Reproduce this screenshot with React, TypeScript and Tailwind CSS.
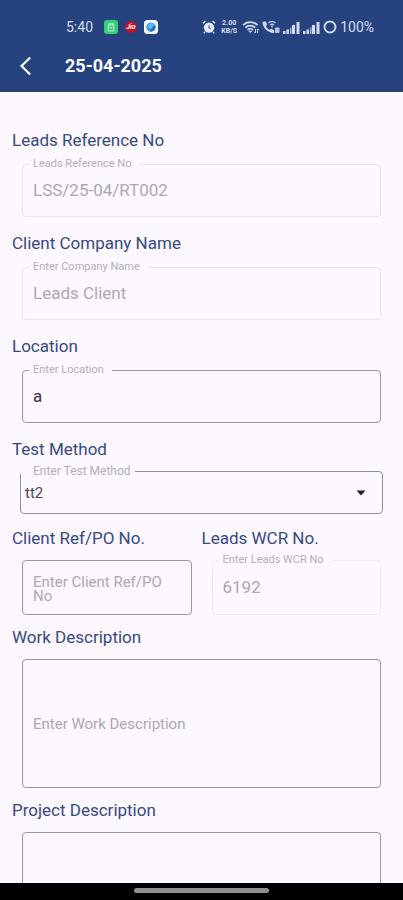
import { useState, type ReactNode } from "react";

function Outline({
  id,
  caption,
  tone = "border-[#9b979f]",
  children,
}: {
  id: string;
  caption: string;
  tone?: string;
  children: ReactNode;
}) {
  return (
    <fieldset className={"mx-2.5 min-w-0 rounded-[4px] border " + tone}>
      <legend className="ml-1.5 h-3 pl-1 pr-2 text-[11px] leading-3 text-[#b3afb5]">
        <label htmlFor={id} className="block">
          {caption}
        </label>
      </legend>
      {children}
    </fieldset>
  );
}

function Heading({ htmlFor, children }: { htmlFor: string; children: ReactNode }) {
  return (
    <label htmlFor={htmlFor} className="block text-[17px] leading-6 text-[#354a80]">
      {children}
    </label>
  );
}

function AlarmIcon() {
  return (
    <svg viewBox="0 0 14 14" className="h-3.5 w-3.5" fill="none" aria-hidden="true">
      <circle cx="7" cy="7.6" r="5.2" fill="#e3e9f5" />
      <path d="M7 5.200v2.600l1.500 1" stroke="#4d6394" strokeWidth="1.200" />
      <path d="M1 3.200 3.400 1.100M13 3.200 10.600 1.100M3 12l-1.200 1.300M11 12l1.200 1.300" stroke="#e3e9f5" strokeWidth="1.500" />
    </svg>
  );
}

function WifiIcon() {
  return (
    <svg viewBox="0 0 17 14" className="h-3.5 w-[17px]" fill="none" stroke="#d3dcee" aria-hidden="true">
      <path d="M1 5.200C5 1 11.500 1 15.500 5.200M3.300 7.700C6 5 10.400 5 13.200 7.700M5.500 10C7 8.500 9.500 8.500 11 10" strokeWidth="1.700" />
      <path d="m6.200 10.800 2.100 2.200 2.100-2.200Z" fill="#d3dcee" stroke="none" />
      <path d="M13.500 9v4M12.400 11.800l1.100 1.200M15.600 13V9M15.600 9l1 1.200" strokeWidth="1" />
    </svg>
  );
}

function CallIcon() {
  return (
    <svg viewBox="0 0 18 14" className="h-3.5 w-[18px]" fill="none" aria-hidden="true">
      <path
        d="M.5 2 3.600 1.200 5.200 4.600 3.900 5.900C4.700 7.800 6 9.100 7.900 10L9.300 8.700 12.200 10.200V13C6.500 13.400.5 8 .5 2Z"
        fill="#d3dcee"
      />
      <path d="M6.500 2.800C8.500 1.200 11.500 1.200 13.500 2.800M8 4.900C9.200 4 10.800 4 12 4.900" stroke="#b9c6e2" strokeWidth="1.500" />
      <path d="M10 5.500v2" stroke="#b9c6e2" strokeWidth="1.500" />
      <rect x="13" y="7.500" width="4.500" height="5.500" rx="1" fill="#b9c6e2" />
    </svg>
  );
}

function SignalIcon() {
  return (
    <svg viewBox="0 0 17 13" className="h-[13px] w-[17px]" fill="#d3dcee" aria-hidden="true">
      <path d="M0 10h2.500v3H0zM3.500 8.500H6V13H3.500zM9 4h3v9H9zM13.500 1h3v12h-3z" />
      <path d="M7 6.500h1.500V13H7z" fill="#9fafd2" />
    </svg>
  );
}

function StatusBar() {
  return (
    <div className="flex h-[26px] items-center justify-between pl-[66px] pr-[29px] text-[#d5deef]">
      <div className="flex items-center gap-[7px]">
        <span className="mr-1 text-sm">5:40</span>
        <svg viewBox="0 0 14 14" className="h-3.5 w-3.5" fill="none" aria-hidden="true">
          <rect width="14" height="14" rx="3" fill="#35cd76" />
          <path d="M5 4.800V3.600h4v1.200M4.300 5h5.400v5.800H4.300zM5.500 7.800h3" stroke="#a8ecc4" strokeWidth="1.200" />
        </svg>
        <span className="flex h-3 w-3 items-center justify-center rounded-full bg-[#c90f22] text-[7px] font-bold italic leading-none text-white">
          Jio
        </span>
        <svg viewBox="0 0 14 14" className="h-3.5 w-3.5" aria-hidden="true">
          <rect width="14" height="14" rx="3.500" fill="#f3f8ff" />
          <circle cx="7" cy="7" r="4.600" fill="#2e8cec" />
          <path d="M3.400 6.500C5 2.800 8.500 2.300 10.500 4L8 7 6.500 9.500Z" fill="#67bdf8" />
          <path d="M11.500 6C12 10 8.500 12.200 5.500 11.300L8 8Z" fill="#226bd5" />
        </svg>
      </div>
      <div className="flex items-center gap-[3px]">
        <AlarmIcon />
        <span className="flex w-5 flex-col items-center text-[7px] font-bold leading-[8px]">
          <span>2.00</span>
          <span>KB/S</span>
        </span>
        <WifiIcon />
        <CallIcon />
        <SignalIcon />
        <SignalIcon />
        <svg viewBox="0 0 14 14" className="h-3.5 w-3.5" fill="none" aria-hidden="true">
          <circle cx="7" cy="7" r="5.500" stroke="#d3dcee" strokeWidth="1.900" />
        </svg>
        <span className="text-sm">100%</span>
      </div>
    </div>
  );
}

export default function App() {
  const [location, setLocation] = useState("a");

  return (
    <div className="flex h-screen flex-col overflow-hidden bg-[#fdf7ff] font-['Roboto',sans-serif]">
      <header className="shrink-0 bg-[#26427f] pt-3.5">
        <StatusBar />
        <div className="flex h-[52px] items-center pl-4">
          <button type="button" aria-label="Back" className="flex h-8 w-[49px] items-center">
            <svg viewBox="0 0 20 20" className="h-5 w-5" fill="none" stroke="#fff" strokeWidth="2.200" aria-hidden="true">
              <path d="M14.200 1.500 5.500 10l8.700 8.500" />
            </svg>
          </button>
          <h1 className="text-lg font-bold leading-6 text-white">25-04-2025</h1>
        </div>
      </header>

      <main className="min-h-0 flex-1 overflow-hidden px-3 pt-9">
        <form>
          <div className="mb-3.5 flex flex-col gap-1.5">
            <Heading htmlFor="reference">Leads Reference No</Heading>
            <Outline id="reference" caption="Leads Reference No" tone="border-[#e9e3eb]">
              <input id="reference" disabled defaultValue="LSS/25-04/RT002" className="block h-[46px] w-full px-2.5 pb-1.5 text-[17px] text-[#aca8af]" />
            </Outline>
          </div>

          <div className="mb-3.5 flex flex-col gap-1.5">
            <Heading htmlFor="company">Client Company Name</Heading>
            <Outline id="company" caption="Enter Company Name" tone="border-[#e9e3eb]">
              <input id="company" disabled defaultValue="Leads Client" className="block h-[46px] w-full px-2.5 pb-1.5 text-[17px] text-[#aca8af]" />
            </Outline>
          </div>

          <div className="mb-3.5 flex flex-col gap-1.5">
            <Heading htmlFor="location">Location</Heading>
            <Outline id="location" caption="Enter Location">
              <input
                id="location"
                value={location}
                onChange={(event) => setLocation(event.target.value)}
                className="block h-[46px] w-full px-2.5 pb-1.5 text-[17px] text-[#39363d] outline-none"
              />
            </Outline>
          </div>

          <div className="mb-3 flex flex-col gap-1">
            <Heading htmlFor="method">Test Method</Heading>
            <fieldset className="mx-2 min-w-0 rounded-[4px] border border-[#8e919d]">
              <legend className="h-3 pl-3 pr-1 text-xs leading-3 text-[#b3afb5]">Enter Test Method</legend>
              <div className="grid h-9 items-center pb-1">
                <select id="method" className="col-start-1 row-start-1 h-8 w-full appearance-none pl-1 text-[15px] text-[#4b484f] outline-none">
                  <option>tt2</option>
                </select>
                <svg viewBox="0 0 10 6" className="pointer-events-none col-start-1 row-start-1 mr-4 h-1.5 w-2.5 justify-self-end" aria-hidden="true">
                  <path d="M.5.5h9L5 5.500z" fill="#252328" />
                </svg>
              </div>
            </fieldset>
          </div>

          <div className="mb-2.5 grid grid-cols-2">
            <div className="flex min-w-0 flex-col gap-2.5">
              <Heading htmlFor="client-ref">Client Ref/PO No.</Heading>
              <textarea
                id="client-ref"
                placeholder="Enter Client Ref/PO No"
                className="mx-2.5 block h-[55px] resize-none overflow-hidden rounded-[4px] border border-[#9b979f] px-2.5 pt-3.5 text-[15px] leading-[14px] outline-none placeholder:text-[#aca8af]"
              />
            </div>
            <div className="flex min-w-0 flex-col gap-1">
              <Heading htmlFor="wcr">Leads WCR No.</Heading>
              <Outline id="wcr" caption="Enter Leads WCR No" tone="border-[#efe9f1]">
                <input id="wcr" disabled defaultValue="6192" className="block h-12 w-full px-2.5 pb-1.5 text-[17px] text-[#aca8af]" />
              </Outline>
            </div>
          </div>

          <div className="mb-2.5 flex flex-col gap-2.5">
            <Heading htmlFor="work">Work Description</Heading>
            <textarea
              id="work"
              placeholder="Enter Work Description"
              className="mx-2.5 block h-[129px] resize-none rounded-[4px] border border-[#9b979f] px-2.5 py-14 text-[15px] leading-4 outline-none placeholder:text-[#aca8af]"
            />
          </div>

          <div className="flex flex-col gap-2.5">
            <Heading htmlFor="project">Project Description</Heading>
            <textarea
              id="project"
              placeholder="Enter Project Description"
              className="mx-2.5 block h-[129px] resize-none rounded-[4px] border border-[#9b979f] px-2.5 py-14 text-[15px] leading-4 outline-none placeholder:text-[#aca8af]"
            />
          </div>
        </form>
      </main>

      <footer className="flex h-[17px] shrink-0 justify-center bg-black pt-[5px]">
        <div className="h-[5px] w-1/3 rounded-full bg-[#8f8f8f]" />
      </footer>
    </div>
  );
}
